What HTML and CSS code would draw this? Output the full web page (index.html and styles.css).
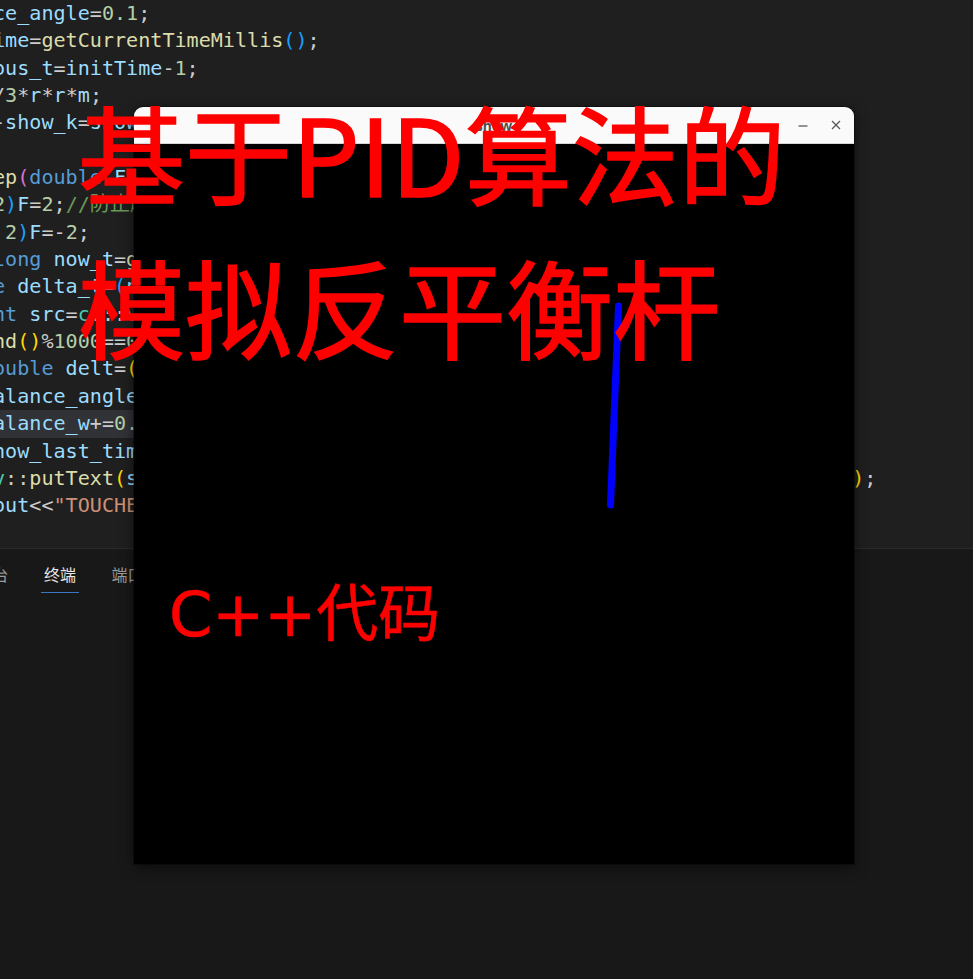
FILE: index.html
```html
<!DOCTYPE html>
<html lang="zh-CN">
<head>
<meta charset="utf-8">
<title>show</title>
<link rel="stylesheet" href="styles.css">
</head>
<body>
<div class="ide">
  <div class="editor">
    <div class="code">
      <div class="ln"><span class="v">ce_angle</span>=<span class="n">0.1</span>;</div>
      <div class="ln"><span class="v">ime</span>=<span class="f">getCurrentTimeMillis</span><span class="b3">()</span>;</div>
      <div class="ln"><span class="v">ous_t</span>=<span class="v">initTime</span>-<span class="n">1</span>;</div>
      <div class="ln">/<span class="n">3</span>*<span class="v">r</span>*<span class="v">r</span>*<span class="v">m</span>;</div>
      <div class="ln">-<span class="v">show_k</span>=<span class="v">show_len</span>/<span class="v">len</span>;</div>
      <div class="ln"> </div>
      <div class="ln"><span class="f">ep</span><span class="b2">(</span><span class="k">double</span> <span class="v">F</span><span class="b2">){</span></div>
      <div class="ln"><span class="n">2</span><span class="b3">)</span><span class="v">F</span>=<span class="n">2</span>;<span class="c">//防止越界</span></div>
      <div class="ln"> <span class="n">2</span><span class="b3">)</span><span class="v">F</span>=-<span class="n">2</span>;</div>
      <div class="ln"><span class="k">long</span> <span class="v">now_t</span>=<span class="f">getCurrentTimeMillis</span><span class="b3">()</span>;</div>
      <div class="ln"><span class="k">e</span> <span class="v">delta_t</span>=<span class="b3">(</span><span class="v">now_t</span>-<span class="v">previous_t</span><span class="b3">)</span>/<span class="n">1000.0</span>;</div>
      <div class="ln"><span class="k">nt</span> <span class="v">src</span>=<span class="t">cv</span>::<span class="t">v</span></div>
      <div class="ln"><span class="f">nd</span><span class="b1">()</span>%<span class="n">1000</span>==<span class="n">0</span><span class="b2">){</span></div>
      <div class="ln"><span class="k">ouble</span> <span class="v">delt</span>=<span class="b1">(</span><span class="f">rand</span><span class="b2">()</span>%<span class="n">100</span><span class="b1">)</span>/<span class="n">1000.0</span>;</div>
      <div class="ln"><span class="v">alance_angle</span>+=<span class="v">delt</span>;</div>
      <div class="ln hl"><span class="v">alance_w</span>+=<span class="n">0.1</span>*<span class="v">delt</span>;</div>
      <div class="ln"><span class="v">how_last_time</span>=<span class="v">now_t</span>;</div>
      <div class="ln"><span class="t">v</span>::<span class="f">putText</span><span class="b1">(</span><span class="v">src</span>,<span class="s">"TOUCHED"</span>,<span class="t">cv</span>::<span class="t">Point</span><span class="b2">(</span><span class="n">100</span>,<span class="n">100</span><span class="b2">)</span>,<span class="n">0</span>,<span class="n">1.5</span>,<span class="t">cv</span>::<span class="t">Scalar</span><span class="b2">(</span><span class="n">0</span>,<span class="n">0</span>,<span class="n">255</span><span class="b2">)</span>,<span class="n">2</span><span class="b1">)</span>;</div>
      <div class="ln"><span class="v">out</span>&lt;&lt;<span class="s">"TOUCHED"</span>&lt;&lt;<span class="v">endl</span>;</div>
    </div>
  </div>
  <div class="panel">
    <div class="tabs">
      <div class="tab">调试控制台</div>
      <div class="tab active">终端</div>
      <div class="tab">端口</div>
    </div>
  </div>
</div>

<div class="window">
  <div class="titlebar">
    <span class="title">show</span>
    <div class="controls">
      <svg class="btn" viewBox="0 0 24 24" width="24" height="24"><line x1="7.5" y1="13" x2="16.5" y2="13"/></svg>
      <svg class="btn" viewBox="0 0 24 24" width="24" height="24"><line x1="8" y1="8" x2="16" y2="16"/><line x1="16" y1="8" x2="8" y2="16"/></svg>
    </div>
  </div>
  <div class="canvas">
    <svg class="pole" viewBox="0 0 720 720" width="720" height="720"><line x1="484.5" y1="162" x2="476.5" y2="361"/></svg>
  </div>
</div>

<div class="poster-title">基于PID算法的<br>模拟反平衡杆</div>
<div class="poster-sub">C++代码</div>
</body>
</html>
```
FILE: styles.css
```css
html, body {
  margin: 0;
  padding: 0;
}
body {
  width: 973px;
  height: 979px;
  overflow: hidden;
  position: relative;
  background: #181818;
}
.ide {
  display: flex;
  flex-direction: column;
  height: 979px;
}
.editor {
  height: 548px;
  background: #1f1f1f;
  border-bottom: 1px solid #2b2b2b;
  overflow: hidden;
  flex: none;
}
.code {
  margin-left: -7px;
  font-family: "DejaVu Sans Mono", "Noto Sans CJK SC", monospace;
  font-size: 20.1px;
  line-height: 27.35px;
  color: #cccccc;
}
.ln {
  height: 27.35px;
  white-space: pre;
}
.ln.hl {
  width: 700px;
  background: #303236;
}
.v { color: #9cdcfe; }
.f { color: #dcdcaa; }
.k { color: #569cd6; }
.n { color: #b5cea8; }
.s { color: #ce9178; }
.c { color: #6a9955; }
.t { color: #4ec9b0; }
.b1 { color: #ffd700; }
.b2 { color: #da70d6; }
.b3 { color: #179fff; }

.panel {
  flex: 1;
  background: #181818;
}
.tabs {
  display: flex;
  gap: 29.5px;
  margin-left: -74.5px;
  padding-top: 7px;
}
.tab {
  height: 36px;
  line-height: 36px;
  padding: 0 3px;
  font-family: "Noto Sans CJK SC", "Noto Sans", sans-serif;
  font-size: 16px;
  color: #9d9d9d;
  border-bottom: 1px solid transparent;
}
.tab.active {
  color: #e7e7e7;
  border-bottom-color: #3b78c2;
}

.window {
  position: absolute;
  left: 134px;
  top: 107px;
  width: 720px;
  border-radius: 9px 9px 0 0;
  box-shadow: 0 0 0 1px rgba(0, 0, 0, 0.35), 0 3px 14px rgba(0, 0, 0, 0.55);
}
.titlebar {
  height: 36px;
  background: #fafafa;
  border-bottom: 1px solid #d6d6d6;
  border-radius: 9px 9px 0 0;
  display: grid;
  grid-template-columns: 1fr auto 1fr;
  align-items: center;
}
.title {
  grid-column: 2;
  font-family: "Noto Sans", sans-serif;
  font-weight: 700;
  font-size: 14px;
  color: #505050;
}
.controls {
  grid-column: 3;
  justify-self: end;
  display: flex;
  align-items: center;
  gap: 9.5px;
  padding-right: 6px;
}
.btn {
  display: block;
  fill: none;
  stroke: #5a5a5a;
  stroke-width: 1.3;
}
.canvas {
  height: 720px;
  background: #000;
}
.pole {
  display: block;
}
.pole line {
  stroke: #0000ff;
  stroke-width: 7;
  stroke-linecap: round;
}

.poster-title {
  position: absolute;
  left: 78px;
  top: 73.5px;
  font-family: "Noto Sans CJK SC", sans-serif;
  font-size: 107px;
  line-height: 154px;
  color: #ff0000;
  -webkit-text-stroke: 1.6px #ff0000;
  white-space: nowrap;
}
.poster-sub {
  position: absolute;
  left: 169px;
  top: 584px;
  font-family: "DejaVu Sans", "Noto Sans CJK SC", sans-serif;
  font-size: 62px;
  line-height: 62px;
  color: #ff0000;
  -webkit-text-stroke: 0.6px #ff0000;
  white-space: nowrap;
}
```
